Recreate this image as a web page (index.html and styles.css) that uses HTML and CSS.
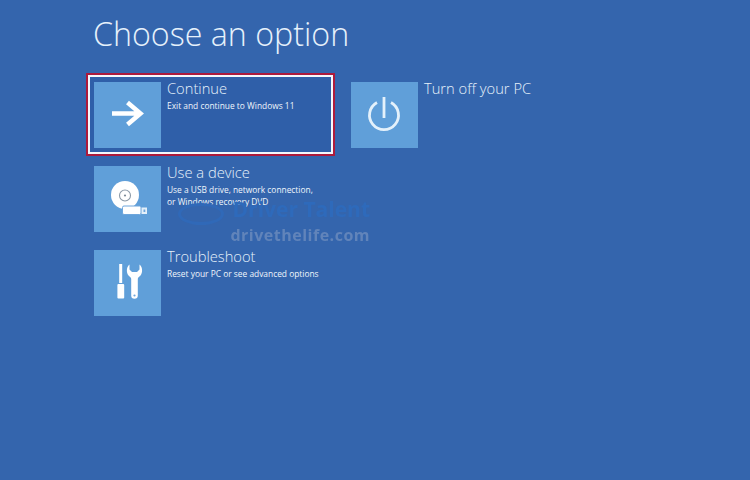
FILE: index.html
```html
<!DOCTYPE html>
<html lang="en">
<head>
    <meta charset="UTF-8">
    <meta name="viewport" content="width=device-width, initial-scale=1.0">
    <title>Choose an option</title>
    <link rel="stylesheet" href="styles.css">
</head>
<body>
    <h1 class="title">Choose an option</h1>

    <div class="options">
        <div class="option selected">
            <div class="tile">
                <svg width="67" height="66" viewBox="0 0 67 66">
                    <path d="M18 31.500H47M33.500 20.500L46.500 31.500L33.500 42.500" fill="none" stroke="#fff" stroke-width="4.500"/>
                </svg>
            </div>
            <div class="option-text">
                <h2>Continue</h2>
                <p>Exit and continue to Windows 11</p>
            </div>
        </div>

        <div class="option">
            <div class="tile">
                <svg width="67" height="66" viewBox="0 0 67 66">
                    <circle cx="31" cy="29" r="14" fill="#fff"/>
                    <circle cx="31" cy="29.500" r="5.500" fill="#fff" stroke="#8c9aa8" stroke-width="1.100"/>
                    <circle cx="31" cy="29.500" r="1.100" fill="#7d8b99"/>
                    <rect x="28.500" y="40" width="18.500" height="8.500" rx="1.500" fill="#fff" stroke="#6ea6dc" stroke-width="1"/>
                    <rect x="47.500" y="41.500" width="5.500" height="6.500" fill="#e4f0fa"/>
                    <rect x="49.500" y="43.500" width="1.800" height="2.500" fill="#6ea6dc"/>
                </svg>
            </div>
            <div class="option-text">
                <h2>Use a device</h2>
                <p>Use a USB drive, network connection,<br>or Windows recovery DVD</p>
            </div>
        </div>

        <div class="option">
            <div class="tile">
                <svg width="67" height="66" viewBox="0 0 67 66">
                    <path d="M25.200 14H28.200V33H25.200Z" fill="#fff"/>
                    <rect x="23.400" y="34" width="6.800" height="14.500" rx="1" fill="#fff"/>
                    <path d="M35.500 14.500C32.500 16.500 32 22.500 34.500 25.500C36 27 37.200 27.500 37.200 29V45.500A3.300 3.300 0 0 0 43.800 45.500V29C43.800 27.500 45 27 46.500 25.500C49 22.500 48.500 16.500 45.500 14.500V19.500L43 22H38L35.500 19.500Z" fill="#fff"/>
                    <circle cx="40.500" cy="45.500" r="1.100" fill="#6ea6dc"/>
                </svg>
            </div>
            <div class="option-text">
                <h2>Troubleshoot</h2>
                <p>Reset your PC or see advanced options</p>
            </div>
        </div>

        <div class="option">
            <div class="tile">
                <svg width="67" height="66" viewBox="0 0 67 66">
                    <path d="M33 15V36" fill="none" stroke="#e4f1fb" stroke-width="2.800"/>
                    <path d="M26 20.500A14.500 14.500 0 1 0 40 20.500" fill="none" stroke="#e4f1fb" stroke-width="2.800"/>
                </svg>
            </div>
            <div class="option-text">
                <h2>Turn off your PC</h2>
            </div>
        </div>
    </div>

    <div class="watermark">
        <div class="watermark-brand">
            <span class="watermark-logo"></span>
            <p>Driver Talent</p>
        </div>
        <p class="watermark-site">drivethelife.com</p>
    </div>
</body>
</html>
```

FILE: styles.css
```css
html, body {
    height: 100%;
}
body {
    margin: 0;
    padding: 13px 0 0 94px;
    box-sizing: border-box;
    background-color: #3465ad;
    color: #e6f1fb;
    font-family: "Open Sans", "Liberation Sans", sans-serif;
    overflow: hidden;
    position: relative;
}
.title {
    margin: 0 0 0 -1px;
    font-size: 32.200px;
    line-height: 42px;
    font-weight: 300;
}
.options {
    display: grid;
    grid-template-columns: 233px 233px;
    grid-template-rows: repeat(3, 66px);
    grid-auto-flow: column;
    column-gap: 24px;
    row-gap: 18px;
    margin-top: 27px;
}
.option {
    display: flex;
    gap: 6px;
    height: 66px;
    position: relative;
}
.option.selected::after {
    content: "";
    position: absolute;
    top: -7px;
    right: -6px;
    bottom: -6px;
    left: -6px;
    z-index: -1;
    background-color: #2f5fa9;
    border: 2px solid #f4f8fc;
    outline: 2px solid #ac1a3c;
}
.tile {
    flex: 0 0 67px;
    height: 66px;
    background-color: #609fd9;
}
.tile svg {
    display: block;
}
.option-text h2 {
    margin: -1px 0 0;
    font-size: 14.700px;
    line-height: 14px;
    font-weight: 300;
}
.option-text p {
    margin: 5px 0 0;
    font-size: 8.400px;
    line-height: 12px;
    color: #f0f6fc;
}
.watermark {
    position: absolute;
    top: 203px;
    left: 178px;
    width: 192px;
    text-align: right;
    font-weight: 700;
    filter: blur(0.6px);
}
.watermark p {
    margin: 0;
}
.watermark-brand {
    color: #2e6abb;
    font-size: 21px;
    line-height: 13px;
    display: flex;
    justify-content: space-between;
    align-items: flex-start;
}
.watermark-logo {
    width: 46px;
    height: 22px;
    border: 3px solid #3069b8;
    border-radius: 50%;
    box-sizing: border-box;
}
.watermark-site {
    color: #6184ba;
    font-size: 16px;
    line-height: 20px;
    letter-spacing: 0.500px;
    margin-top: 2px;
}
```
